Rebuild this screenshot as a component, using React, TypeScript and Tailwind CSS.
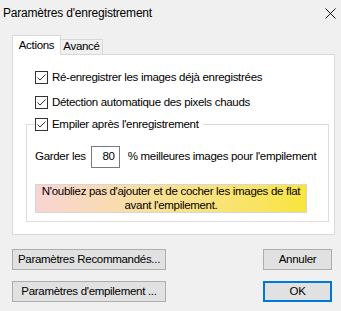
import React from "react";

const Check: React.FC = () => (
  <span className="flex h-[13px] w-[13px] shrink-0 items-center justify-center border border-[#333333] bg-white">
    <svg viewBox="0 0 11 11" className="h-[11px] w-[11px]" fill="none" stroke="#333333" strokeWidth={1}>
      <path d="M1.5 5.5 L4 8 L9.5 2.5" />
    </svg>
  </span>
);

const CheckRow: React.FC<{ label: string }> = ({ label }) => (
  <label className="flex items-center gap-[4px] whitespace-nowrap">
    <Check />
    <span>{label}</span>
  </label>
);

const Btn: React.FC<{ label: string; w: string; primary?: boolean }> = ({ label, w, primary }) => (
  <button
    className={`flex h-[21px] shrink-0 items-center justify-center whitespace-nowrap bg-[#e1e1e1] ${w} ${
      primary ? "border-2 border-[#0078d7]" : "border border-[#adadad]"
    }`}
  >
    {label}
  </button>
);

export default function App() {
  return (
    <div
      className="flex h-[311px] w-[341px] flex-col overflow-hidden bg-[#f0f0f0] text-[11.5px] tracking-[-0.3px] text-black"
      style={{ fontFamily: '"Liberation Sans", Arial, sans-serif' }}
    >
      {/* title bar */}
      <div className="flex h-[26px] shrink-0 items-center justify-between pl-[3px] pr-[5px]">
        <span className="whitespace-nowrap text-[12px] tracking-[-0.2px]">Paramètres d'enregistrement</span>
        <svg viewBox="0 0 12 12" className="h-[11px] w-[11px]" stroke="#000" strokeWidth={1}>
          <path d="M0.5 0.5 L11.5 11.5 M11.5 0.5 L0.5 11.5" />
        </svg>
      </div>

      {/* tabs */}
      <div className="mt-[9px] flex shrink-0 items-end pl-[12px]">
        <div className="relative z-10 -mb-px flex h-[20px] w-[49px] items-center justify-center border border-b-0 border-[#d9d9d9] bg-white">
          Actions
        </div>
        <div className="flex h-[15px] w-[42px] items-center justify-center border border-b-0 border-l-0 border-[#d9d9d9] bg-[#f0f0f0]">
          Avancé
        </div>
      </div>

      {/* panel */}
      <div className="ml-[12px] flex h-[181px] w-[323px] shrink-0 flex-col border border-[#d9d9d9] bg-white pl-[22px] pt-[14px]">
        <div className="flex flex-col gap-[8px]">
          <CheckRow label="Ré-enregistrer les images déjà enregistrées" />
          <CheckRow label="Détection automatique des pixels chauds" />
        </div>
        <fieldset className="-ml-[9px] mt-[4px] h-[106px] w-[294px] border border-[#dcdcdc] pl-[8px] pr-[12px]">
          <legend className="ml-0 px-0 pr-[4px]">
            <CheckRow label="Empiler après l'enregistrement" />
          </legend>
          <div className="mt-[13px] flex items-center whitespace-nowrap">
            <span>Garder les</span>
            <span className="ml-[5px] flex h-[22px] w-[29px] items-center justify-end border border-[#7a7a7a] bg-white pr-[4px]">
              80
            </span>
            <span className="ml-[8px]">% meilleures images pour l'empilement</span>
          </div>
          <div className="mt-[16px] flex h-[29px] w-[272px] flex-col items-center justify-center whitespace-nowrap border border-[#d6d6d6] bg-gradient-to-r from-[#f8d4d4] via-[#f9e18e] to-[#f9e53a] leading-[14px]">
            <span>N'oubliez pas d'ajouter et de cocher les images de flat</span>
            <span>avant l'empilement.</span>
          </div>
        </fieldset>
      </div>

      {/* buttons */}
      <div className="mt-[14px] flex justify-between pl-[12px] pr-[9px]">
        <div className="flex flex-col gap-[11px]">
          <Btn label="Paramètres Recommandés..." w="w-[154px]" />
          <Btn label="Paramètres d'empilement ..." w="w-[154px]" />
        </div>
        <div className="flex flex-col gap-[11px]">
          <Btn label="Annuler" w="w-[69px]" />
          <Btn label="OK" w="w-[69px]" primary />
        </div>
      </div>
    </div>
  );
}
